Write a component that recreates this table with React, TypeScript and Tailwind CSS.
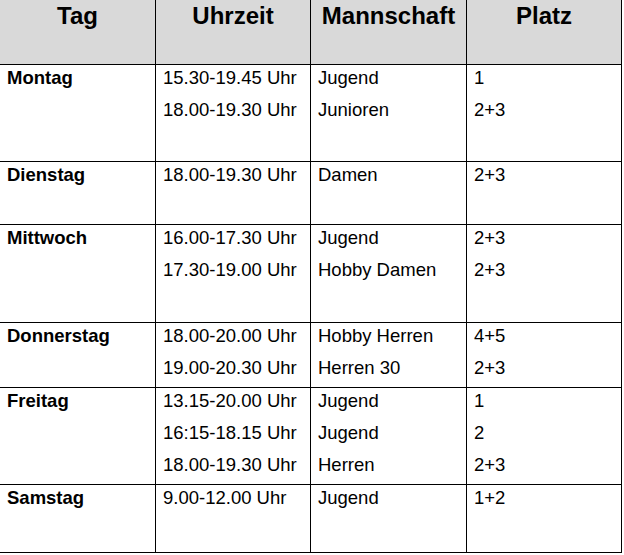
const rows: { day: string; h: string; items: [string, string, string][] }[] = [
  {
    day: 'Montag',
    h: 'h-[97px]',
    items: [
      ['15.30-19.45 Uhr', 'Jugend', '1'],
      ['18.00-19.30 Uhr', 'Junioren', '2+3'],
    ],
  },
  { day: 'Dienstag', h: 'h-[63px]', items: [['18.00-19.30 Uhr', 'Damen', '2+3']] },
  {
    day: 'Mittwoch',
    h: 'h-[98px]',
    items: [
      ['16.00-17.30 Uhr', 'Jugend', '2+3'],
      ['17.30-19.00 Uhr', 'Hobby Damen', '2+3'],
    ],
  },
  {
    day: 'Donnerstag',
    h: 'h-[65px]',
    items: [
      ['18.00-20.00 Uhr', 'Hobby Herren', '4+5'],
      ['19.00-20.30 Uhr', 'Herren 30', '2+3'],
    ],
  },
  {
    day: 'Freitag',
    h: 'h-[97px]',
    items: [
      ['13.15-20.00 Uhr', 'Jugend', '1'],
      ['16:15-18.15 Uhr', 'Jugend', '2'],
      ['18.00-19.30 Uhr', 'Herren', '2+3'],
    ],
  },
  { day: 'Samstag', h: 'h-[67px]', items: [['9.00-12.00 Uhr', 'Jugend', '1+2']] },
];

const cols = ['w-[156px]', 'w-[155px]', 'w-[156px]', 'w-[155px]'];

function Cell({ w, children }: { w: string; children: React.ReactNode }) {
  return <div className={`${w} shrink-0 border-r border-black pl-[7px] pt-[2px]`}>{children}</div>;
}

function Line({ text, bold }: { text: string; bold?: boolean }) {
  return <p className={`mb-[10px] leading-[22px] ${bold ? 'font-bold' : ''}`}>{text}</p>;
}

export default function App() {
  const headers = ['Tag', 'Uhrzeit', 'Mannschaft', 'Platz'];
  return (
    <div className="min-h-screen bg-white">
      <div
        className="w-[622px] border-b border-black text-[18.5px] text-black"
        style={{ fontFamily: '"Liberation Sans", Arial, sans-serif' }}
      >
        <div className="flex h-[65px] border-b border-black bg-[#d9d9d9]">
          {headers.map((t, i) => (
            <div
              key={t}
              className={`${cols[i]} shrink-0 border-r border-black pt-[3px] text-center text-[24px] font-bold leading-[26px]`}
            >
              {t}
            </div>
          ))}
        </div>
        {rows.map((r, ri) => (
          <div key={r.day} className={`flex ${r.h} ${ri < rows.length - 1 ? 'border-b border-black' : ''}`}>
            <Cell w={cols[0]}>
              <Line text={r.day} bold />
            </Cell>
            <Cell w={cols[1]}>
              {r.items.map((it, i) => (
                <Line key={i} text={it[0]} />
              ))}
            </Cell>
            <Cell w={cols[2]}>
              {r.items.map((it, i) => (
                <Line key={i} text={it[1]} />
              ))}
            </Cell>
            <Cell w={cols[3]}>
              {r.items.map((it, i) => (
                <Line key={i} text={it[2]} />
              ))}
            </Cell>
          </div>
        ))}
      </div>
    </div>
  );
}
